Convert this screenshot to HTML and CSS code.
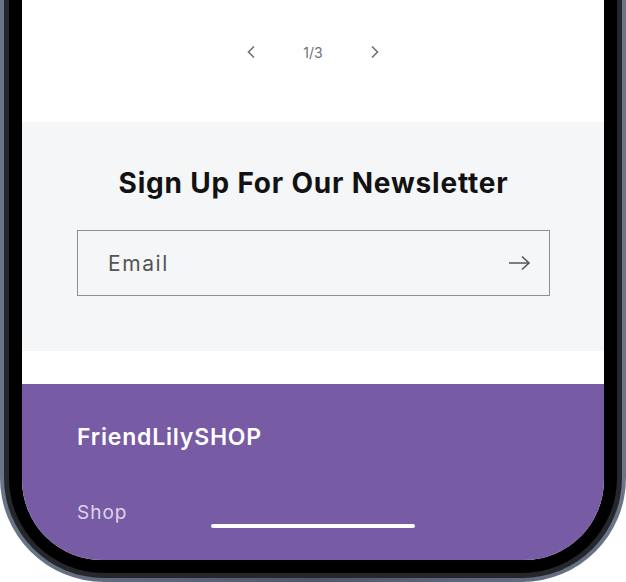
FILE: index.html
```html
<!DOCTYPE html>
<html lang="en">
<head>
    <meta charset="UTF-8">
    <meta name="viewport" content="width=device-width, initial-scale=1.0">
    <title>FriendLilySHOP</title>
    <link rel="stylesheet" href="styles.css">
</head>
<body>
    <div class="phone">
        <div class="frame">
            <div class="bezel">
                <div class="screen">
                    <div class="slider">
                        <div class="slider-controls">
                            <button class="slider-button" aria-label="Previous">
                                <svg width="10" height="14" viewBox="0 0 10 14"><polyline points="8,1.5 2.5,7 8,12.5" /></svg>
                            </button>
                            <span class="slider-counter">1/3</span>
                            <button class="slider-button" aria-label="Next">
                                <svg width="10" height="14" viewBox="0 0 10 14"><polyline points="2,1.5 7.5,7 2,12.5" /></svg>
                            </button>
                        </div>
                    </div>

                    <div class="newsletter">
                        <h2>Sign Up For Our Newsletter</h2>
                        <form class="newsletter-form" onsubmit="return false;">
                            <input type="email" placeholder="Email" aria-label="Email">
                            <button class="newsletter-submit" aria-label="Subscribe">
                                <svg width="23" height="16" viewBox="0 0 23 16"><line x1="1" y1="8" x2="21" y2="8" /><polyline points="14,1.5 21,8 14,14.5" /></svg>
                            </button>
                        </form>
                    </div>

                    <div class="spacer"></div>

                    <footer class="footer">
                        <h3 class="footer-brand">FriendLilySHOP</h3>
                        <a class="footer-link" href="#">Shop</a>
                    </footer>

                    <div class="home-indicator"></div>
                </div>
            </div>
        </div>
    </div>
</body>
</html>
```

FILE: styles.css
```css
body {
    margin: 0;
    background: #fff;
    font-family: Inter, 'Noto Sans', sans-serif;
    overflow: hidden;
}
.phone {
    width: 626px;
    height: 582px;
    box-sizing: border-box;
    padding: 0 4px 4px 4px;
    background: linear-gradient(90deg, #6b758a, #4f586b 50%, #6b758a);
    border-radius: 0 0 104px 104px;
}
.frame {
    height: 100%;
    box-sizing: border-box;
    padding: 0 5px 5px 5px;
    background: #26272b;
    border-radius: 0 0 100px 100px;
}
.bezel {
    height: 100%;
    box-sizing: border-box;
    padding: 0 13px 13px 13px;
    background: #000;
    border-radius: 0 0 95px 95px;
}
.screen {
    position: relative;
    height: 100%;
    overflow: hidden;
    background: #fff;
    border-radius: 0 0 80px 80px;
}
.slider {
    height: 122px;
    box-sizing: border-box;
    padding-top: 30px;
}
.slider-controls {
    display: flex;
    justify-content: center;
    align-items: center;
    height: 44px;
}
.slider-button {
    width: 44px;
    height: 44px;
    display: flex;
    align-items: center;
    justify-content: center;
    background: none;
    border: none;
    padding: 0;
    cursor: pointer;
}
.slider-button svg polyline {
    fill: none;
    stroke: #6f6f6f;
    stroke-width: 1.6;
}
.slider-counter {
    width: 80px;
    text-align: center;
    font-size: 14px;
    color: #6f7176;
}
.newsletter {
    background: #f5f6f8;
    height: 229px;
    box-sizing: border-box;
    padding: 44px 54px 0 55px;
}
.newsletter h2 {
    margin: 0 0 30px 0;
    text-align: center;
    font-size: 28px;
    line-height: 34px;
    font-weight: 700;
    letter-spacing: 0.8px;
    color: #121212;
}
.newsletter-form {
    position: relative;
    display: flex;
    align-items: center;
    height: 66px;
    box-sizing: border-box;
    border: 1px solid #8f8f8f;
}
.newsletter-form input {
    flex: 1;
    height: 100%;
    border: none;
    background: transparent;
    padding: 0 0 0 30px;
    font-family: inherit;
    font-size: 21px;
    letter-spacing: 1.6px;
    color: #333;
    outline: none;
}
.newsletter-form input::placeholder {
    color: #555;
}
.newsletter-submit {
    width: 64px;
    height: 100%;
    display: flex;
    align-items: center;
    justify-content: center;
    background: none;
    border: none;
    padding: 0 0 0 4px;
    cursor: pointer;
}
.newsletter-submit svg line,
.newsletter-submit svg polyline {
    fill: none;
    stroke: #555;
    stroke-width: 1.6;
}
.spacer {
    height: 33px;
}
.footer {
    background: #775ba4;
    height: 300px;
    padding: 39px 55px 0 55px;
}
.footer-brand {
    margin: 0 0 49px 0;
    font-size: 23px;
    line-height: 28.6px;
    font-weight: 600;
    letter-spacing: 0.8px;
    color: #fff;
}
.footer-link {
    display: block;
    font-size: 19px;
    line-height: 24.7px;
    letter-spacing: 1px;
    color: #ddd5ea;
    text-decoration: none;
}
.home-indicator {
    position: absolute;
    left: 50%;
    bottom: 32px;
    width: 204px;
    height: 4px;
    margin-left: -102px;
    border-radius: 2px;
    background: #fff;
}
```
